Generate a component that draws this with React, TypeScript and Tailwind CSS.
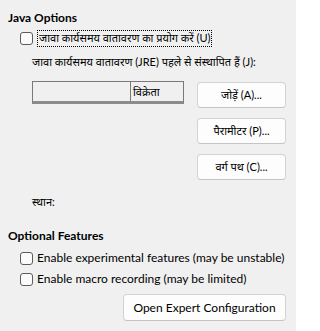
const ui = 'Lato, "Noto Sans Devanagari", "Nirmala UI", "Noto Sans", sans-serif'

function Box() {
  return <span className="w-[13px] h-[13px] shrink-0 rounded-[3px] border border-[#5c5c5c] bg-[#fbfbfb]" />
}

function Btn({ label, className = '' }: { label: string; className?: string }) {
  return (
    <button
      type="button"
      className={`h-[26px] rounded-[4px] border border-[#d3d3d3] border-b-[#c4c4c4] bg-[#fdfdfd] text-black ${className}`}
    >
      {label}
    </button>
  )
}

export default function App() {
  return (
    <div
      className="w-[296px] h-[331px] bg-[#f0f0f0] text-[12px] leading-[16px] text-black pl-[8px] pt-[10px] flex flex-col"
      style={{ fontFamily: ui }}
    >
      <h3 className="font-bold">Java Options</h3>

      <label className="mt-[3px] ml-[12px] flex items-center gap-[4px] h-[18px]">
        <Box />
        <span className="border border-dotted border-black px-[1px] h-[17px] flex items-center text-[11px]">
          जावा कार्यसमय वातावरण का प्रयोग करें (U)
        </span>
      </label>

      <p className="mt-[7px] ml-[24px] text-[11px]">जावा कार्यसमय वातावरण (JRE) पहले से संस्थापित हैं (J):</p>

      <div className="mt-[11px] ml-[24px] flex">
        <div className="w-[152px] h-[23px] flex border border-[#7a7a7a] border-b-[3px] border-b-[#8c8c8c] bg-[#f0f0f0]">
          <div className="w-[98px] border-r border-[#7a7a7a]" />
          <div className="pl-[2px] pt-[2px] text-[11px]">विक्रेता</div>
        </div>

        <div className="ml-[13px] mt-[1px] flex flex-col gap-[10px] text-[11px]">
          <Btn label="जोड़ें (A)..." className="w-[89px]" />
          <Btn label="पैरामीटर (P)..." className="w-[89px]" />
          <Btn label="वर्ग पथ (C)..." className="w-[89px]" />
        </div>
      </div>

      <p className="mt-[14px] ml-[24px] text-[11px]">स्थान:</p>

      <h3 className="mt-[18px] font-bold">Optional Features</h3>

      <div className="mt-[4px] ml-[12px] flex flex-col gap-[1px]">
        <label className="flex items-center gap-[4px] h-[20px]">
          <Box />
          <span className="whitespace-nowrap">Enable experimental features (may be unstable)</span>
        </label>
        <label className="flex items-center gap-[4px] h-[20px]">
          <Box />
          <span className="whitespace-nowrap">Enable macro recording (may be limited)</span>
        </label>
      </div>

      <div className="mt-[5px] pr-[10px] flex justify-end">
        <Btn label="Open Expert Configuration" className="w-[163px] h-[27px] text-[12px]" />
      </div>
    </div>
  )
}
